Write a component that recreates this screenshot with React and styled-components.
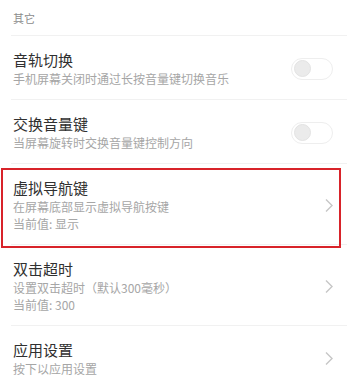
import React from 'react'
import styled, { createGlobalStyle } from 'styled-components'

const items = [
  { title: '音轨切换', desc: ['手机屏幕关闭时通过长按音量键切换音乐'], kind: 'switch' },
  { title: '交换音量键', desc: ['当屏幕旋转时交换音量键控制方向'], kind: 'switch' },
  { title: '虚拟导航键', desc: ['在屏幕底部显示虚拟导航按键', '当前值: 显示'], kind: 'arrow', marked: true },
  { title: '双击超时', desc: ['设置双击超时（默认300毫秒）', '当前值: 300'], kind: 'arrow' },
  { title: '应用设置', desc: ['按下以应用设置'], kind: 'arrow' },
]

function App() {
  return (
    <>
      <GlobalStyle />
      <Screen>
        <SectionHeader>其它</SectionHeader>
        <Divider />
        {items.map((item) => (
          <React.Fragment key={item.title}>
            <Row $marked={item.marked}>
              <TextBox>
                <Title>{item.title}</Title>
                {item.desc.map((line) => (
                  <Desc key={line}>{line}</Desc>
                ))}
              </TextBox>
              {item.kind === 'switch' ? (
                <Switch>
                  <Knob />
                </Switch>
              ) : (
                <Chevron width="10" height="15" viewBox="0 0 10 15">
                  <polyline points="2,1.5 8,7.5 2,13.5" />
                </Chevron>
              )}
            </Row>
            <Divider />
          </React.Fragment>
        ))}
      </Screen>
    </>
  )
}

export default App

const GlobalStyle = createGlobalStyle`
    body {
        margin: 0;
        background: #fff;
        font-family: "Noto Sans CJK SC", "Noto Sans", sans-serif;
    }
`;
const Screen = styled.div`
    width: 347px;
    height: 386px;
    overflow: hidden;
    background: #fff;
`;
const SectionHeader = styled.div`
    height: 35px;
    display: flex;
    align-items: center;
    padding-left: 13px;
    font-size: 11px;
    color: #8c8c8c;
`;
const Divider = styled.div`
    height: 1px;
    margin-left: 11px;
    background: #f1f1f1;
`;
const Row = styled.div`
    position: relative;
    display: flex;
    align-items: center;
    justify-content: space-between;
    padding: 14px 14px 12px 13px;
    &::after {
        content: '';
        display: ${(p) => (p.$marked ? 'block' : 'none')};
        position: absolute;
        top: 4px;
        bottom: -4px;
        left: 1px;
        right: 6px;
        border: 2px solid #d8232a;
    }
`;
const TextBox = styled.div`
    display: flex;
    flex-direction: column;
`;
const Title = styled.span`
    font-size: 15px;
    line-height: 20px;
    color: #303030;
`;
const Desc = styled.span`
    font-size: 12px;
    line-height: 17px;
    color: #a6a6a6;
`;
const Switch = styled.div`
    width: 38px;
    height: 20px;
    border: 1px solid #eeeeee;
    border-radius: 11px;
    background: #fff;
    display: flex;
    align-items: center;
    padding-left: 2px;
    box-sizing: content-box;
`;
const Knob = styled.div`
    width: 17px;
    height: 17px;
    border-radius: 50%;
    background: #ebebeb;
    border: 1px solid #e3e3e3;
    box-sizing: border-box;
`;
const Chevron = styled.svg`
    display: block;
    fill: none;
    stroke: #c6c6c6;
    stroke-width: 1.4;
    margin-right: -1px;
`;
